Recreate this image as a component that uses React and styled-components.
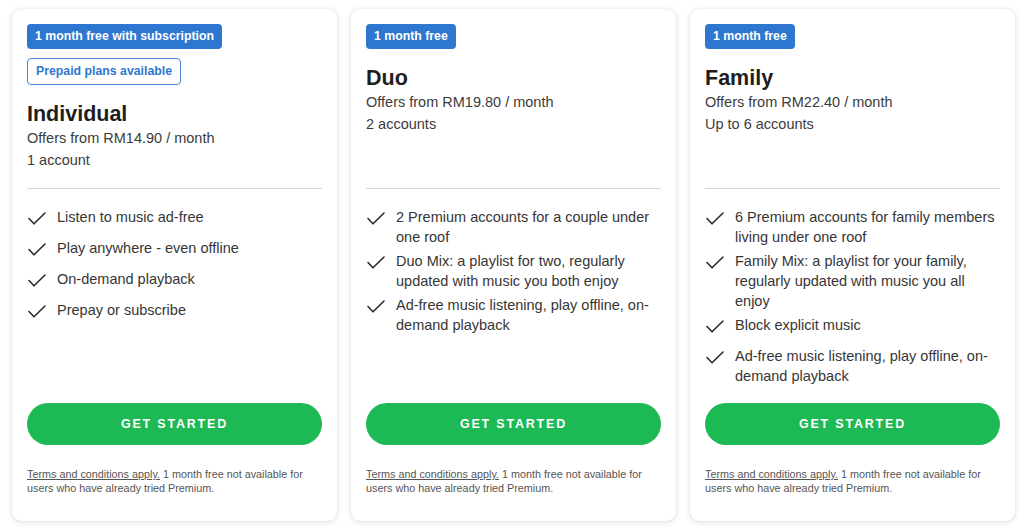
// Libs
import React from 'react';
import styled, { createGlobalStyle } from 'styled-components';

// Styles
const GlobalStyle = createGlobalStyle`
  html, body {
    margin: 0;
    padding: 0;
    background: #FFFFFF;
  }

  body {
    font-family: 'Liberation Sans', Arial, sans-serif;
  }
`;

const Container = styled.section`
  display: flex;
  gap: 14px;
  width: 1024px;
  height: 531px;
  padding: 9px 0 0 12px;
  box-sizing: border-box;
`;

const Card = styled.article`
  display: flex;
  flex-direction: column;
  width: 325px;
  height: 512px;
  padding: 15px 15px 26px;
  box-sizing: border-box;
  background: #FFFFFF;
  border-radius: 9px;
  box-shadow: 0 0 1px rgba(0, 0, 0, 0.16), 0 1px 6px rgba(0, 0, 0, 0.13);
`;

const Header = styled.header`
  display: flex;
  flex-direction: column;
  align-items: flex-start;
  min-height: 164px;
`;

const Badges = styled.div`
  display: flex;
  flex-direction: column;
  align-items: flex-start;
  gap: 9px;
`;

const Badge = styled.span`
  display: inline-block;
  padding: ${({ $outline }) => ($outline ? '5px 8px' : '5px 8px')};
  border: ${({ $outline }) => ($outline ? '1px solid #4a8ad8' : 'none')};
  border-radius: 4px;
  background: ${({ $outline }) => ($outline ? '#FFFFFF' : '#2E77D0')};
  color: ${({ $outline }) => ($outline ? '#2E77D0' : '#FFFFFF')};
  font: 700 12.3px/15px 'Liberation Sans', Arial, sans-serif;
`;

const Title = styled.h2`
  margin: 16px 0 0;
  font: 700 21.5px/26px 'Liberation Sans', Arial, sans-serif;
  color: #1E1E1E;
`;

const Info = styled.p`
  margin: 0;
  font: 400 14.5px/22px 'Liberation Sans', Arial, sans-serif;
  color: #3C3C3C;
`;

const Divider = styled.hr`
  width: 100%;
  margin: 0;
  border: none;
  border-top: 1px solid #D6D6D6;
`;

const Features = styled.ul`
  display: flex;
  flex-direction: column;
  gap: 4px;
  margin: 18px 0 0;
  padding: 0;
  list-style: none;
`;

const Feature = styled.li`
  display: flex;
  gap: 10px;
  min-height: 27px;
  font: 400 14.5px/20px 'Liberation Sans', Arial, sans-serif;
  color: #363636;
`;

const CheckIcon = styled.svg`
  flex-shrink: 0;
  width: 20px;
  height: 20px;
  margin-top: 4px;
`;

const Button = styled.button`
  width: 100%;
  height: 42px;
  margin-top: auto;
  border: none;
  border-radius: 21px;
  background: #1DB954;
  color: #FFFFFF;
  font: 700 12.5px 'Liberation Sans', Arial, sans-serif;
  letter-spacing: 1.8px;
  cursor: pointer;
`;

const Terms = styled.p`
  margin: 22px 0 0;
  font: 400 10.8px/14px 'Liberation Sans', Arial, sans-serif;
  color: #555555;
`;

const TermsLink = styled.a`
  color: #555555;
  text-decoration: underline;
`;

const plans = [
  {
    name: 'Individual',
    badges: ['1 month free with subscription'],
    outline: 'Prepaid plans available',
    price: 'Offers from RM14.90 / month',
    accounts: '1 account',
    features: [
      'Listen to music ad-free',
      'Play anywhere - even offline',
      'On-demand playback',
      'Prepay or subscribe',
    ],
  },
  {
    name: 'Duo',
    badges: ['1 month free'],
    price: 'Offers from RM19.80 / month',
    accounts: '2 accounts',
    features: [
      '2 Premium accounts for a couple under one roof',
      'Duo Mix: a playlist for two, regularly updated with music you both enjoy',
      'Ad-free music listening, play offline, on-demand playback',
    ],
  },
  {
    name: 'Family',
    badges: ['1 month free'],
    price: 'Offers from RM22.40 / month',
    accounts: 'Up to 6 accounts',
    features: [
      '6 Premium accounts for family members living under one roof',
      'Family Mix: a playlist for your family, regularly updated with music you all enjoy',
      'Block explicit music',
      'Ad-free music listening, play offline, on-demand playback',
    ],
  },
];

const Check = () => (
  <CheckIcon viewBox='0 0 20 20' fill='none'>
    <polyline
      points='2,7.5 7,12.8 18,2'
      stroke='#2A2A2A'
      strokeWidth='1.6'
      strokeLinecap='round'
      strokeLinejoin='round'
    />
  </CheckIcon>
);

const App = () => {
  const renderPlan = (plan) => (
    <Card key={plan.name}>
      <Header>
        <Badges>
          {plan.badges.map((badge) => <Badge key={badge}>{badge}</Badge>)}
          {plan.outline && <Badge $outline>{plan.outline}</Badge>}
        </Badges>
        <Title>{plan.name}</Title>
        <Info>{plan.price}</Info>
        <Info>{plan.accounts}</Info>
      </Header>
      <Divider />
      <Features>
        {plan.features.map((feature) => (
          <Feature key={feature}>
            <Check />
            <span>{feature}</span>
          </Feature>
        ))}
      </Features>
      <Button>GET STARTED</Button>
      <Terms>
        <TermsLink href='#terms'>Terms and conditions apply.</TermsLink>
        {' 1 month free not available for users who have already tried Premium.'}
      </Terms>
    </Card>
  );

  return (
    <>
      <GlobalStyle />
      <Container>
        {plans.map(renderPlan)}
      </Container>
    </>
  );
};

export default App;
